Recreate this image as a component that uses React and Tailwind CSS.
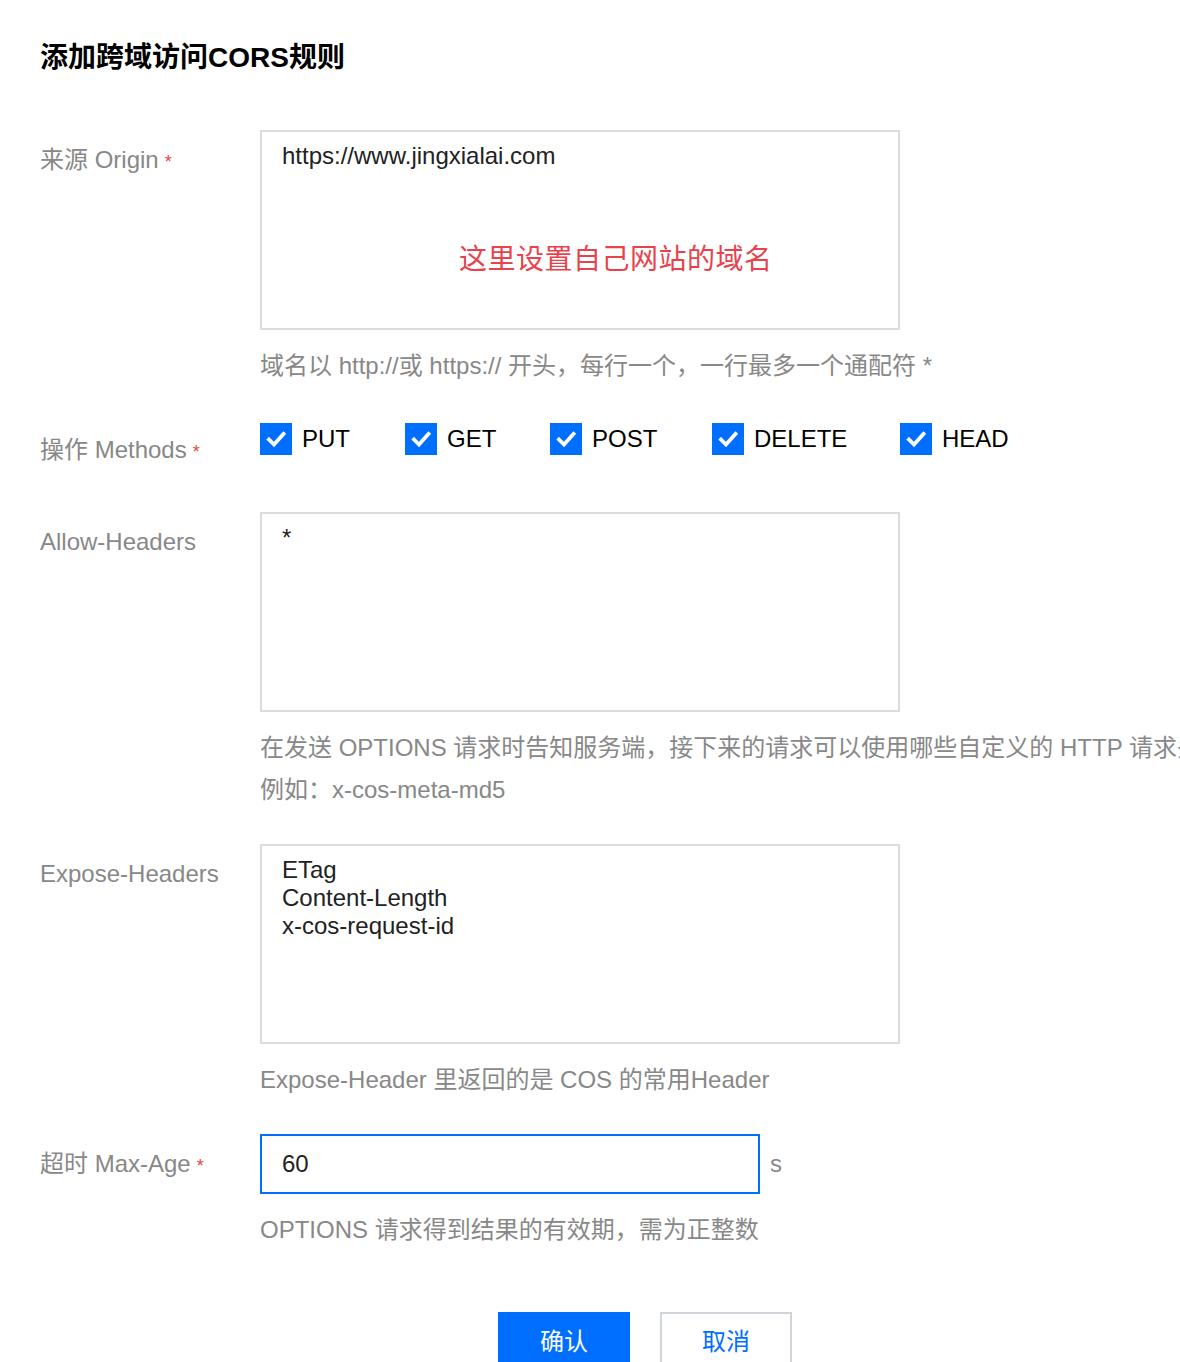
const font = { fontFamily: '"Liberation Sans", "Noto Sans CJK SC", sans-serif' };

const Label = ({ children, required }) => (
  <div className="h-[60px] w-[220px] shrink-0 text-[24px] leading-[60px] text-[#888]">
    {children}
    {required && <span className="ml-[6px] text-[18px] leading-none text-[#e54545]">*</span>}
  </div>
);

const Hint = ({ children }) => (
  <div className="mt-[15px] text-[24px] leading-[42px] text-[#888] whitespace-nowrap">{children}</div>
);

const TextBox = ({ lines, children }) => (
  <div className="relative h-[200px] w-[640px] border-2 border-[#dcdcdc] bg-white px-[20px] pt-[10px] text-[24px] leading-[28px] text-[#222]">
    {lines.map((l) => (
      <div key={l}>{l}</div>
    ))}
    {children}
  </div>
);

const Check = ({ label, width }) => (
  <div className="flex items-center" style={{ width }}>
    <span className="flex h-[32px] w-[32px] items-center justify-center bg-[#006eff]">
      <svg width="22" height="22" viewBox="0 0 22 22">
        <path d="M4 11.5l5 5L18.5 6" fill="none" stroke="#fff" strokeWidth="3.8" strokeLinecap="square" />
      </svg>
    </span>
    <span className="ml-[10px] text-[24px] leading-[32px] text-black">{label}</span>
  </div>
);

export default function App() {
  return (
    <div className="h-[1362px] w-[1180px] overflow-hidden bg-white pl-[40px] pt-[38px]" style={font}>
      <h1 className="text-[28px] font-bold leading-[40px] text-black">添加跨域访问CORS规则</h1>

      <div className="mt-[52px] flex">
        <Label required>来源 Origin</Label>
        <div>
          <TextBox lines={["https://www.jingxialai.com"]}>
            <div className="absolute left-[197px] top-[108px] text-[28px] leading-[40px] tracking-[0.5px] text-[#e8434c]">
              这里设置自己网站的域名
            </div>
          </TextBox>
          <Hint>域名以 http://或 https:// 开头，每行一个，一行最多一个通配符 *</Hint>
        </div>
      </div>

      <div className="mt-[33px] flex items-start">
        <Label required>操作 Methods</Label>
        <div className="flex items-start pt-[3px]">
          <Check label="PUT" width={145} />
          <Check label="GET" width={145} />
          <Check label="POST" width={162} />
          <Check label="DELETE" width={188} />
          <Check label="HEAD" width={140} />
        </div>
      </div>

      <div className="mt-[32px] flex">
        <Label>Allow-Headers</Label>
        <div>
          <TextBox lines={["*"]} />
          <Hint>
            在发送 OPTIONS 请求时告知服务端，接下来的请求可以使用哪些自定义的 HTTP 请求头
            <br />
            例如：x-cos-meta-md5
          </Hint>
        </div>
      </div>

      <div className="mt-[33px] flex">
        <Label>Expose-Headers</Label>
        <div>
          <TextBox lines={["ETag", "Content-Length", "x-cos-request-id"]} />
          <Hint>Expose-Header 里返回的是 COS 的常用Header</Hint>
        </div>
      </div>

      <div className="mt-[33px] flex">
        <Label required>超时 Max-Age</Label>
        <div>
          <div className="flex items-center">
            <div className="h-[60px] w-[500px] border-2 border-[#006eff] px-[20px] text-[24px] leading-[56px] text-[#222]">
              60
            </div>
            <span className="ml-[10px] text-[24px] text-[#888]">s</span>
          </div>
          <Hint>OPTIONS 请求得到结果的有效期，需为正整数</Hint>
        </div>
      </div>

      <div className="mt-[61px] flex pl-[458px]">
        <button className="h-[60px] w-[132px] bg-[#006eff] text-[24px] text-white">确认</button>
        <button className="ml-[30px] h-[60px] w-[132px] border-2 border-[#d0d4db] bg-white text-[24px] text-[#006eff]">
          取消
        </button>
      </div>
    </div>
  );
}
